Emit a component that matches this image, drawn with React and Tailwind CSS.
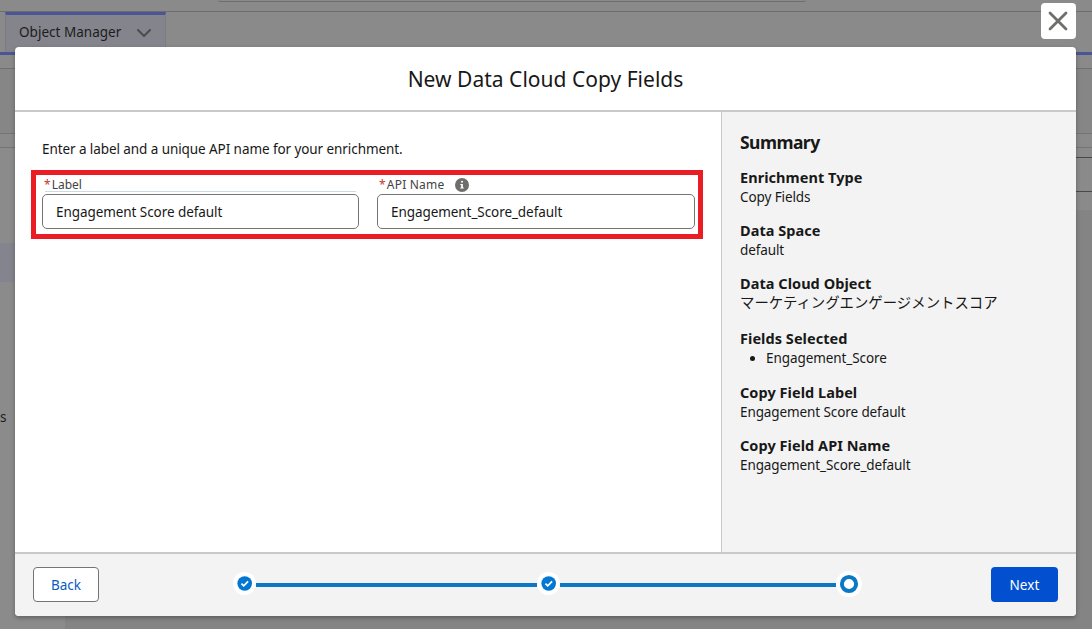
import { ChevronDown, X } from "lucide-react";

const summary = [
  { title: "Enrichment Type", value: "Copy Fields", gap: "mb-[13px]" },
  { title: "Data Space", value: "default", gap: "mb-[13px]" },
  { title: "Data Cloud Object", value: "マーケティングエンゲージメントスコア", wide: true, gap: "mb-[15px]" },
  { title: "Fields Selected", value: "Engagement_Score", list: true, gap: "mb-[14px]" },
  { title: "Copy Field Label", value: "Engagement Score default", gap: "mb-[13px]" },
  { title: "Copy Field API Name", value: "Engagement_Score_default", gap: "" },
];

function DoneStep() {
  return (
    <svg className="-mt-[2px] shrink-0" width="23" height="23" viewBox="0 0 23 23">
      <circle cx="11.5" cy="11.5" r="11.5" fill="#fff" />
      <circle cx="11.7" cy="11.5" r="7.3" fill="#0176d3" />
      <path d="M8.4 11.6l2.3 2.2 4.4-4.5" fill="none" stroke="#fff" strokeWidth="1.8" />
    </svg>
  );
}

function CurrentStep() {
  return (
    <svg className="-mt-[2px] shrink-0" width="26" height="26" viewBox="0 0 26 26">
      <circle cx="13" cy="13" r="13" fill="#fff" />
      <circle cx="13" cy="13" r="7.1" fill="#fff" stroke="#0b78c6" strokeWidth="4" />
    </svg>
  );
}

function InfoIcon() {
  return (
    <svg className="ml-[11px]" width="14" height="14" viewBox="0 0 14 14">
      <circle cx="7" cy="7" r="7" fill="#706e6b" />
      <rect x="6" y="2.8" width="2" height="2" rx="1" fill="#fff" />
      <path d="M5.3 5.9h2.6v3.6h.9v1.1H5.2V9.5h.9V7h-.8z" fill="#fff" />
    </svg>
  );
}

function Field({ label, value, info, underline, width, labelClass }) {
  return (
    <div className={"relative " + width}>
      <label className={"flex h-[19px] items-center pl-[2px] text-[12px] text-[#444] " + labelClass}>
        <span className="mr-[1px] text-[#c23934]">*</span>
        {label}
        {info && <InfoIcon />}
      </label>
      {underline && <div className="absolute left-[3px] right-[3px] top-4 h-px bg-[#c9dbe3]" />}
      <div className="flex h-[35px] items-center rounded-[5px] border border-[#747474] bg-white pl-[13px] pt-[2px] text-[13.5px] tracking-[-0.07px] text-[#181818]">
        {value}
      </div>
    </div>
  );
}

// Setup page behind the dialog, already dimmed
function Backdrop() {
  return (
    <div className="flex h-full flex-col bg-[#8a8a8a]">
      <div className="h-3 shrink-0 border-b border-[#6e6e6e]">
        <div className="ml-[218px] h-[2px] w-[588px] rounded-b border-b border-[#6e6e6e]" />
      </div>
      <div className="flex h-[43px] shrink-0 border-b-[3px] border-[#4a5596] pl-[5px]">
        <div className="flex w-[161px] items-center border-x border-t-[3px] border-x-[#7c7c84] border-t-[#4a5596] bg-[#83848c] pb-[2px] pl-[13px] text-[13.5px] tracking-[0.02px] text-[#1c1c1c]">
          Object Manager
          <ChevronDown className="ml-[11px] h-6 w-6 text-[#4c4c4c]" strokeWidth={2} />
        </div>
      </div>
      <div className="h-[14px] shrink-0 border-b border-[#707070]" />
      <div className="h-[65px] shrink-0 border-b border-[#747474] bg-[#868686]" />
      <div className="h-[14px] shrink-0 border-b border-[#747474]" />
      <div className="flex min-h-0 grow justify-between">
        <div className="w-[65px] bg-[#8b8b8b] pt-[95px]">
          <div className="h-[39px] bg-[#83848e]" />
          <div className="mt-[125px] text-[13.5px] text-[#1c1c1c]">s</div>
        </div>
        <div className="grow bg-[#848484]">
          <div className="h-[62px] bg-[#8a8a8a] pt-[9px]">
            <div className="h-[35px] border-y border-[#484848]" />
          </div>
        </div>
      </div>
    </div>
  );
}

export default function App() {
  return (
    <div className="relative h-[629px] w-[1092px] overflow-hidden font-['Noto_Sans','Noto_Sans_CJK_JP',sans-serif]">
      <Backdrop />

      <button className="absolute left-[1041px] top-[3px] flex h-9 w-[35px] items-center justify-center rounded bg-white pr-px">
        <X className="h-8 w-8 shrink-0 text-[#706e6b]" strokeWidth={2.1} />
      </button>

      <div className="absolute left-[15px] top-[47px] flex h-[569px] w-[1061px] flex-col overflow-hidden rounded bg-white shadow-[0_2px_4px_rgba(0,0,0,0.3)]">
        <header className="flex h-[65px] shrink-0 items-center justify-center border-b-2 border-[#c9c9c9] pt-[2px]">
          <h2 className="text-[21px] tracking-[0.02px] text-[#181818]">New Data Cloud Copy Fields</h2>
        </header>

        <div className="flex min-h-0 grow">
          <main className="w-[706px] pl-4 pt-[27px]">
            <p className="pl-[11px] text-[13.5px] leading-5 tracking-[-0.08px] text-[#181818]">
              Enter a label and a unique API name for your enrichment.
            </p>
            <div className="mt-[11px] flex h-[69px] w-[672px] gap-[18px] border-[5px] border-[#ea1c24] pl-[6px]">
              <Field label="Label" value="Engagement Score default" width="w-[317px]" labelClass="" underline />
              <Field label="API Name" value="Engagement_Score_default" width="w-[318px]" labelClass="tracking-[0.2px]" info />
            </div>
          </main>

          <aside className="grow border-l border-[#c9c9c9] bg-[#f3f3f3] pl-[18px] pt-[18px] text-[#181818]">
            <h3 className="mb-[13px] text-[17.5px] font-bold leading-6 tracking-[-0.55px]">Summary</h3>
            {summary.map((item) => (
              <div key={item.title} className={item.gap}>
                <h4 className="text-[14.5px] font-bold leading-5 tracking-[0.05px]">{item.title}</h4>
                {item.list ? (
                  <ul className="list-disc pl-[26px]">
                    <li className="text-[13.5px] leading-5 tracking-[-0.08px]">{item.value}</li>
                  </ul>
                ) : (
                  <p className={item.wide ? "text-[14.4px] leading-5" : "text-[13.5px] leading-5 tracking-[-0.1px]"}>
                    {item.value}
                  </p>
                )}
              </div>
            ))}
          </aside>
        </div>

        <footer className="flex h-16 shrink-0 items-center border-t-2 border-[#c9c9c9] bg-[#f3f3f3] px-[18px] pb-px">
          <button className="h-[35px] w-[66px] rounded border border-[#747474] bg-white pt-px text-[13.5px] text-[#0b5cc0]">Back</button>
          <div className="ml-[134px] flex items-center">
            <DoneStep />
            <div className="h-1 w-[281px] bg-[#0b78c6]" />
            <DoneStep />
            <div className="h-1 w-[276px] bg-[#0b78c6]" />
            <CurrentStep />
          </div>
          <button className="ml-auto h-[35px] w-[67px] rounded bg-[#0250d0] pt-px text-[13.5px] tracking-[0.1px] text-white">Next</button>
        </footer>
      </div>
    </div>
  );
}
